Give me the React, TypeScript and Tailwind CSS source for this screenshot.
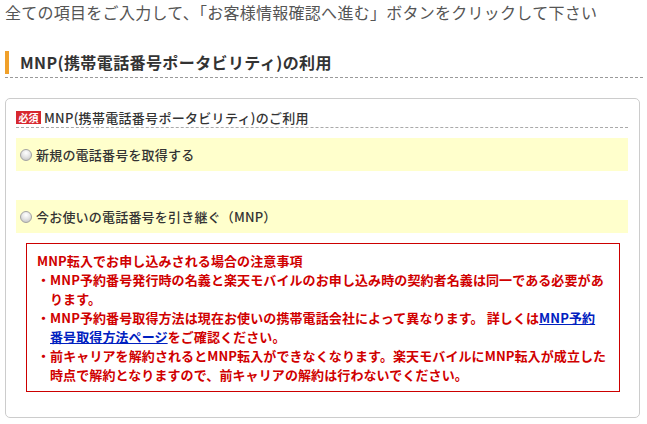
import React from "react";

const Radio = () => (
  <span className="inline-block w-[12px] h-[12px] rounded-full border border-[#a3a3a3] bg-[radial-gradient(circle_at_50%_30%,#ffffff_0%,#e6e6e6_45%,#bdbdbd_100%)] shrink-0" />
);

export default function App() {
  return (
    <div className="w-[647px] h-[424px] bg-white overflow-hidden font-['Noto_Sans_CJK_JP','Noto_Sans',sans-serif]">
      <p className="pl-[5px] pt-[1px] text-[16px] leading-[22px] tracking-[0.27px] text-[#555] whitespace-nowrap">
        全ての項目をご入力して、「お客様情報確認へ進む」ボタンをクリックして下さい
      </p>

      <div className="mt-[28px] ml-[5px] mr-[4px] pb-[3px] border-b border-dashed border-[#9a9a9a]">
        <div className="flex items-center h-[23px]">
          <span className="w-[4px] h-[23px] bg-[#f0a02a]" />
          <h2 className="ml-[11px] text-[16px] leading-[23px] tracking-[0.4px] font-bold text-[#333] whitespace-nowrap">
            MNP(携帯電話番号ポータビリティ)の利用
          </h2>
        </div>
      </div>

      <div className="mt-[20px] ml-[5px] w-[635px] h-[320px] border border-[#cccccc] rounded-[5px] pl-[10px] pr-[11px] pt-[9px]">
        <div className="flex items-center h-[20px] border-b border-dashed border-[#aaaaaa]">
          <span className="flex items-center justify-center w-[25px] h-[13px] bg-[#d7282f] text-white text-[10px] leading-[13px] font-bold">
            必須
          </span>
          <span className="ml-[3px] text-[13px] leading-[18px] tracking-[0.3px] font-medium text-[#333] whitespace-nowrap">
            MNP(携帯電話番号ポータビリティ)のご利用
          </span>
        </div>

        <div className="mt-[10px] h-[33px] bg-[#ffffcc] flex items-center pl-[4px]">
          <Radio />
          <span className="ml-[4px] text-[13px] leading-[18px] tracking-[0.2px] font-medium text-[#333]">新規の電話番号を取得する</span>
        </div>

        <div className="mt-[29px] h-[33px] bg-[#ffffcc] flex items-center pl-[4px]">
          <Radio />
          <span className="ml-[4px] text-[13px] leading-[18px] tracking-[0.2px] font-medium text-[#333]">今お使いの電話番号を引き継ぐ（MNP）</span>
        </div>

        <div className="mt-[10px] ml-[10px] mr-[8px] border border-[#cc0000] pt-[7px] pb-[7px] pl-[10px] text-[13px] leading-[19px] tracking-[0.1px] font-bold text-[#d00000] whitespace-nowrap">
          <div>MNP転入でお申し込みされる場合の注意事項</div>
          <div>・MNP予約番号発行時の名義と楽天モバイルのお申し込み時の契約者名義は同一である必要があ</div>
          <div className="pl-[13px]">ります。</div>
          <div>
            ・MNP予約番号取得方法は現在お使いの携帯電話会社によって異なります。 詳しくは
            <a className="text-[#0020c0] underline">MNP予約</a>
          </div>
          <div className="pl-[13px]">
            <a className="text-[#0020c0] underline">番号取得方法ページ</a>をご確認ください。
          </div>
          <div>・前キャリアを解約されるとMNP転入ができなくなります。楽天モバイルにMNP転入が成立した</div>
          <div className="pl-[13px]">時点で解約となりますので、前キャリアの解約は行わないでください。</div>
        </div>
      </div>
    </div>
  );
}
